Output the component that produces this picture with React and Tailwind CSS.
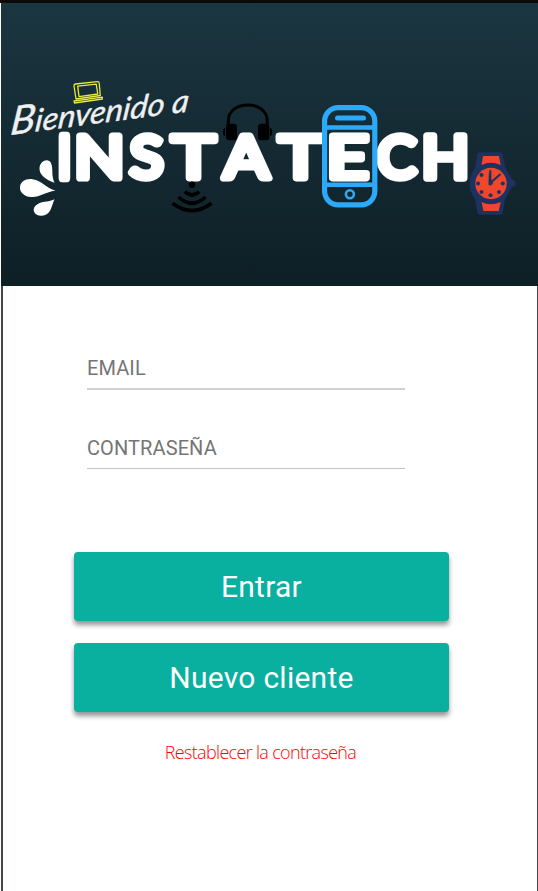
import React from "react";

// drawn extent of each letter, in px
const LETTERS = [
  { ch: "I", left: 58, width: 13.4 },
  { ch: "N", left: 76, width: 47 },
  { ch: "S", left: 127, width: 38.5 },
  { ch: "T", left: 168, width: 50.5 },
  { ch: "A", left: 220, width: 53 },
  { ch: "T", left: 275, width: 50.5 },
  { ch: "E", left: 329, width: 41.5 },
  { ch: "C", left: 375.5, width: 43.5 },
  { ch: "H", left: 423, width: 45 },
];
const SIZE = 58.6;
const STROKE = 7.7;

function Wordmark() {
  const ctx = document.createElement("canvas").getContext("2d");
  ctx.font = `400 ${SIZE}px Lato`;
  return (
    <g
      fontFamily="Lato, sans-serif"
      fontSize={SIZE}
      fill="#fff"
      stroke="#fff"
      strokeWidth={STROKE}
      strokeLinejoin="round"
    >
      {LETTERS.map((l, i) => {
        const m = ctx.measureText(l.ch);
        const ink = m.actualBoundingBoxRight + m.actualBoundingBoxLeft;
        const sx = (l.width - STROKE) / ink;
        const x = l.left + STROKE / 2 + m.actualBoundingBoxLeft * sx;
        return (
          <text
            key={i}
            transform={`translate(${x} 178.2) scale(${sx} 1)`}
            vectorEffect="non-scaling-stroke"
          >
            {l.ch}
          </text>
        );
      })}
    </g>
  );
}

function Logo() {
  return (
    <svg width="537" height="283" viewBox="1 3 537 283" className="block">
      {/* laptop */}
      <g fill="none" stroke="#e9ea35" strokeWidth="1.3" strokeLinejoin="round">
        <path d="M75.5 84 L97.5 81.6 Q99 81.5 99.2 83 L100.3 95.5 L76 99 L74 86 Q74 84.3 75.5 84Z" />
        <path d="M77.7 86.2 L96.2 84.2 L97.8 94 L79 96.7Z" />
        <path d="M74 101 L102.3 97.2 L102.3 99 L74.5 103Z" />
      </g>

      {/* headphones */}
      <path d="M228.3 127 V121 C228.3 99.5 267.2 99.5 267.2 121 V127" fill="none" stroke="#000" strokeWidth="3" />
      <rect x="226" y="123.7" width="11" height="16.5" rx="3.2" />
      <rect x="258" y="123.7" width="11.3" height="16.5" rx="3.2" />
      <path d="M225 127.5 Q222.7 128.5 222.7 132 T225 136.5Z M270 127.5 Q272.3 128.5 272.3 132 T270 136.5Z" />

      <Wordmark />

      <text
        transform="translate(9.5 135) rotate(-7.5) skewX(-14)"
        fontFamily="Lato, sans-serif"
        fontStyle="italic"
        fontSize="31"
        fontWeight="400"
        textLength="180"
        lengthAdjust="spacingAndGlyphs"
        fill="#f0f0f0"
        stroke="#f0f0f0"
        strokeWidth="0.4"
        strokeLinejoin="round"
      >
        <tspan fontSize="39">B</tspan>ienvenido a
      </text>

      {/* splash */}
      <g fill="#fff">
        <path d="M54.5 182.8 C45 179.5 39 174 39.5 168 C40 160.5 48.5 157.5 51 163 C53.5 169 51 175 54.5 182.8Z" />
        <path d="M55.5 190.5 C45 192 40 197.5 31 197 C23.5 196.6 19.5 191.5 20 187 C20.7 181 26 178.3 32.5 179.2 C42 180.5 46 188 55.5 190.5Z" />
        <path d="M54.5 199.3 C51.5 206 51 215.5 41.5 215.8 C34.5 216 31.5 210 35.5 205.8 C40.5 200.8 48 202.5 54.5 199.3Z" />
      </g>

      {/* wireless */}
      <circle cx="192" cy="184.7" r="3.2" />
      <g fill="none" stroke="#000" strokeWidth="3.7">
        <path d="M184.8 191.5 Q192 198.5 199.2 191.5" />
        <path d="M178.5 197 Q192 209.5 205.5 197" />
        <path d="M172.5 203.3 Q192 218 211.5 203.3" />
      </g>

      {/* phone */}
      <g fill="none" stroke="#2caafa">
        <rect x="324.6" y="107.6" width="50.2" height="97.2" rx="13.5" strokeWidth="5.2" />
        <path d="M325 127.5 H375 M325 184.7 H375" strokeWidth="4.6" />
        <path d="M337.5 118 H363.5" strokeWidth="5" strokeLinecap="round" />
        <circle cx="349.9" cy="194.2" r="4" strokeWidth="2.6" />
      </g>

      {/* watch */}
      <g>
        <path d="M480 152.3 H500 Q502.3 152.3 502.8 155 L505 167 L512 179.5 Q515.5 180.5 515.5 183.4 T512 187 L505 199 L502.8 212 Q502.3 214.8 500 214.8 H480 Q477.7 214.8 477.2 212 L475 199 C468 190 468 177 475 168 L477.2 155 Q477.7 152.3 480 152.3Z" fill="#1d3260" />
        <path d="M483 156 H499 L500.7 165 Q490.5 160.5 481.5 165Z M481.5 202 Q490.5 206.5 500.7 202 L498.7 211 H483.5Z" fill="#ee472c" />
        <circle cx="491" cy="183.5" r="15.7" fill="#ee472c" />
        <g fill="#1d3260">
          <circle cx="481.5" cy="175" r="2" />
          <circle cx="478" cy="183.5" r="2" />
          <circle cx="481.5" cy="192" r="2" />
          <circle cx="490.5" cy="195.2" r="2" />
          <circle cx="499" cy="192" r="2" />
          <circle cx="502.8" cy="183.5" r="2" />
        </g>
        <path d="M490.3 171 V183 L500 174.5" fill="none" stroke="#1d3260" strokeWidth="2.1" strokeLinecap="round" />
        <path d="M488.8 173 L488.5 184.5 Q490.5 187 493 183.5Z" fill="#1d3260" />
      </g>
    </svg>
  );
}

function Field({ label, border }) {
  return (
    <div className={`flex h-[49px] items-center pt-[7px] text-[20px] tracking-[0.1px] text-[#757575] ${border}`}>
      {label}
    </div>
  );
}

function Button({ children }) {
  return (
    <button className="h-[69px] w-[375px] rounded-[4px] bg-[#09af9f] text-[30px] tracking-[0.25px] text-white shadow-[0_4px_5px_rgba(0,0,0,0.42)]">
      {children}
    </button>
  );
}

export default function App() {
  return (
    <div className="flex h-[891px] w-[538px] flex-col overflow-hidden bg-white font-[Roboto,sans-serif]">
      <div className="h-[3px] bg-[#0a0b09]" />
      <header className="ml-px h-[283px] bg-linear-to-b from-[#1b3641] to-[#0e1f26]">
        <Logo />
      </header>
      <main className="ml-px flex flex-1 flex-col border-r border-l-2 border-l-[#42474a] border-r-[#42474a] pl-[71px]">
        <div className="ml-[13px] mt-[55px] flex w-[318px] flex-col gap-[30px]">
          <Field label="EMAIL" border="border-b-2 border-[#d0d0d0]" />
          <Field label="CONTRASEÑA" border="border-b border-[#c4c4c4]" />
        </div>
        <div className="mt-[83px] flex flex-col gap-[22px]">
          <Button>Entrar</Button>
          <Button>Nuevo cliente</Button>
        </div>
        <a className="mt-[28px] w-[373px] text-center font-['Open_Sans',sans-serif] text-[18px] leading-[25px] font-light tracking-[-0.68px] text-[#ff0000]">
          Restablecer la contraseña
        </a>
      </main>
    </div>
  );
}
